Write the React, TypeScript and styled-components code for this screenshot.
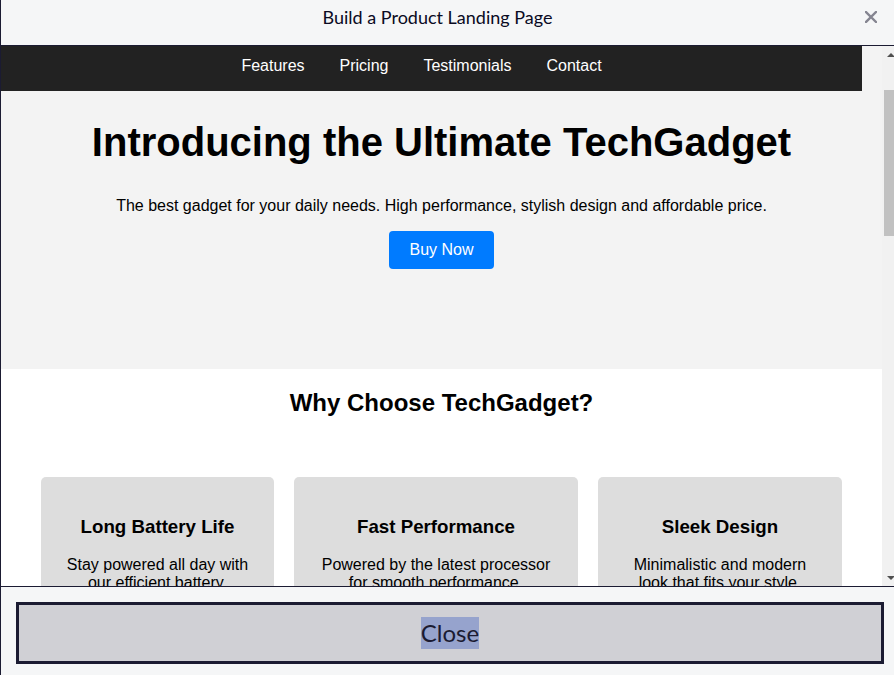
import React from 'react';
import styled, { createGlobalStyle } from 'styled-components';

const GlobalStyle = createGlobalStyle`
	html, body {
		margin: 0;
		padding: 0;
		overflow: hidden;
		background: #f5f6f7;
	}
`;

const features = [
	{ title: 'Long Battery Life', text: 'Stay powered all day with our efficient battery.' },
	{ title: 'Fast Performance', text: 'Powered by the latest processor for smooth performance.' },
	{ title: 'Sleek Design', text: 'Minimalistic and modern look that fits your style.' },
];

export default function App() {
	return (
		<>
			<GlobalStyle />
			<Modal>
				<Header>
					<Title>Build a Product Landing Page</Title>
					<CloseIcon aria-label="Close">
						<svg width="12" height="12" viewBox="0 0 12 12">
							<path d="M1 1 L11 11 M11 1 L1 11" stroke="#858591" strokeWidth="2.4" strokeLinecap="square" />
						</svg>
					</CloseIcon>
				</Header>
				<Viewport>
					<Page>
						<Nav>
							<NavLink>Features</NavLink>
							<NavLink>Pricing</NavLink>
							<NavLink>Testimonials</NavLink>
							<NavLink>Contact</NavLink>
						</Nav>
						<Hero>
							<h1>Introducing the Ultimate TechGadget</h1>
							<p>
								The best gadget for your daily needs. High performance, stylish
								design and affordable price.
							</p>
							<BuyButton>Buy Now</BuyButton>
						</Hero>
						<Features>
							<h2>Why Choose TechGadget?</h2>
							<Cards>
								{features.map((f) => (
									<Card key={f.title}>
										<h3>{f.title}</h3>
										<p>{f.text}</p>
									</Card>
								))}
							</Cards>
						</Features>
					</Page>
					<Scrollbar>
						<Arrow direction="up" />
						<Track>
							<Thumb />
						</Track>
						<Arrow direction="down" />
					</Scrollbar>
				</Viewport>
				<Footer>
					<CloseButton>
						<Selected>Close</Selected>
					</CloseButton>
				</Footer>
			</Modal>
		</>
	);
}

const Modal = styled.div`
	width: 898px;
	height: 675px;
	border-left: 1px solid #1b1b32;
	display: flex;
	flex-direction: column;
	background: #f5f6f7;
	font-family: 'Liberation Sans', Arial, sans-serif;
`;

const Header = styled.header`
	height: 46px;
	display: flex;
	align-items: flex-start;
	padding: 6px 0 0 9px;
	box-sizing: border-box;
	border-bottom: 1px solid #1b1b32;
	flex-shrink: 0;
`;

const Title = styled.h2`
	flex: 1;
	margin: 0;
	text-align: center;
	font-family: Lato, 'Noto Sans', sans-serif;
	font-weight: 400;
	font-size: 18px;
	line-height: 22px;
	color: #0a0a23;
`;

const CloseIcon = styled.button`
	width: 12px;
	height: 12px;
	margin: 5px 22px 0 0;
	padding: 0;
	border: none;
	background: none;
	display: flex;
`;

const Viewport = styled.div`
	height: 540px;
	display: flex;
	border-bottom: 1px solid #1b1b32;
	flex-shrink: 0;
	overflow: hidden;
`;

const Page = styled.div`
	width: 881px;
	background: #f3f3f3;
	overflow: hidden;
`;

const Nav = styled.nav`
	height: 45px;
	margin-right: 20px;
	padding-right: 20px;
	background: #222;
	display: flex;
	justify-content: center;
	align-items: center;
	gap: 35px;
	padding-bottom: 6px;
	box-sizing: border-box;
`;

const NavLink = styled.a`
	color: #fff;
	font-size: 16px;
	text-decoration: none;
`;

const Hero = styled.section`
	padding: 28px 20px 100px;
	text-align: center;
	color: #000;

	h1 {
		margin: 0;
		font-size: 40px;
		line-height: 46px;
	}

	p {
		margin: 32px 0 16px;
		font-size: 16px;
		line-height: 18px;
	}
`;

const BuyButton = styled.button`
	height: 38px;
	padding: 0 20px;
	border: none;
	border-radius: 4px;
	background: #007bff;
	color: #fff;
	font-family: inherit;
	font-size: 16px;
`;

const Features = styled.section`
	background: #fff;
	padding: 20px 40px 40px;
	text-align: center;

	h2 {
		margin: 0 0 60px;
		font-size: 24px;
		line-height: 28px;
	}
`;

const Cards = styled.div`
	display: grid;
	grid-template-columns: 233px 284px 244px;
	gap: 20px;
`;

const Card = styled.div`
	background: #ddd;
	border-radius: 5px;
	padding: 20px;

	h3 {
		margin: 18px 0 18px;
		font-size: 18.72px;
		line-height: 23px;
	}

	p {
		margin: 0;
		font-size: 16px;
		line-height: 18px;
	}
`;

const Scrollbar = styled.div`
	width: 17px;
	background: #f1f1f1;
	display: flex;
	flex-direction: column;
	flex-shrink: 0;
`;

const Arrow = styled.div<{ direction: 'up' | 'down' }>`
	height: 17px;
	display: flex;
	align-items: center;
	justify-content: center;

	&::before {
		content: '';
		border-left: 4px solid transparent;
		border-right: 4px solid transparent;
		${(p) =>
			p.direction === 'up'
				? 'border-bottom: 4px solid #505050;'
				: 'border-top: 4px solid #505050;'}
	}
`;

const Track = styled.div`
	flex: 1;
	padding: 27px 2px 0;
`;

const Thumb = styled.div`
	height: 146px;
	background: #c1c1c1;
`;

const Footer = styled.footer`
	flex: 1;
	padding: 15px 15px 0;
`;

const CloseButton = styled.button`
	width: 100%;
	height: 62px;
	border: 3px solid #1b1b32;
	background: #d0d0d5;
	color: #1b1b32;
	font-family: Lato, 'Noto Sans', sans-serif;
	font-size: 24px;
	padding: 0;
`;

const Selected = styled.span`
	background: #96a3cd;
	display: inline-block;
	line-height: 32px;
`;
